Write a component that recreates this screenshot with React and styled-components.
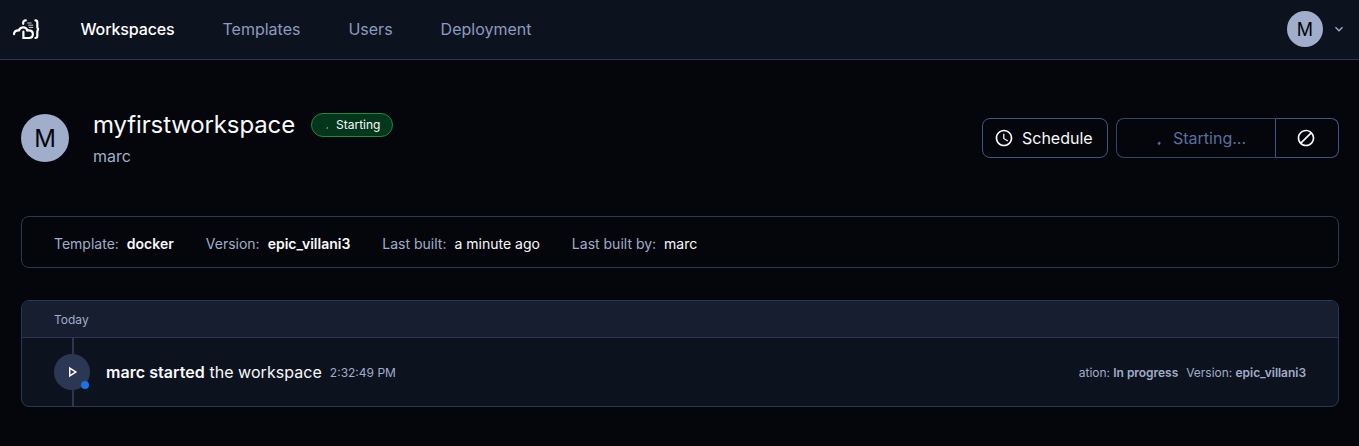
import React from "react";
import styled, { createGlobalStyle, css } from "styled-components";
import {
  MdOutlineSchedule,
  MdBlock,
  MdOutlinePlayArrow,
  MdKeyboardArrowDown,
} from "react-icons/md";

const color = {
  page: "#04060b",
  paper: "#0d121f",
  header: "#161e30",
  divider: "#2c3753",
  control: "#42557f",
  muted: "#a0adc8",
  nav: "#8c9bbf",
  text: "#f8f9fb",
};

const GlobalStyle = createGlobalStyle`
  *, *::before, *::after { box-sizing: border-box; }
  body {
    margin: 0;
    background: ${color.page};
    color: ${color.text};
    font-family: Inter, "Liberation Sans", sans-serif;
    font-size: 16px;
    line-height: 1.6;
    overflow: hidden;
  }
  svg { display: block; flex: none; }
`;

const Navbar = styled.header`
  display: flex;
  align-items: center;
  height: 60px;
  padding: 0 12px;
  background: ${color.paper};
  border-bottom: 1px solid ${color.divider};
`;

const Nav = styled.nav`
  display: flex;
  flex: 1;
  gap: 48px;
  margin-left: 38.5px;
`;

const NavItem = styled.a`
  color: ${(p) => (p.$active ? "#fff" : color.nav)};
  font-weight: ${(p) => (p.$active ? 500 : 400)};
  letter-spacing: ${(p) => (p.$active ? "-0.13px" : "normal")};
`;

const Avatar = styled.div`
  display: flex;
  align-items: center;
  justify-content: center;
  flex: none;
  width: ${(p) => p.$size}px;
  height: ${(p) => p.$size}px;
  border-radius: 50%;
  background: #a0aecc;
  color: #04060b;
  font-size: ${(p) => p.$size / 2}px;
  line-height: 1;
  padding-top: ${(p) => (p.$size > 40 ? 1 : 2)}px;
`;

const UserMenu = styled.div`
  display: flex;
  align-items: center;
  gap: 8px;
  margin-bottom: 1px;
  color: ${color.muted};
`;

const Main = styled.main`
  padding: 0 20px 0 21px;
`;

const PageHeader = styled.div`
  display: flex;
  align-items: center;
  height: 156px;
`;

const Heading = styled.div`
  flex: 1;
  margin-left: 24px;
  padding-top: 2px;
`;

const TitleRow = styled.div`
  display: flex;
  align-items: center;
  gap: 16px;
  height: 29px;
`;

const Title = styled.h1`
  margin: 0;
  font-size: 24px;
  font-weight: 400;
  line-height: 29px;
  letter-spacing: -0.13px;
`;

const Owner = styled.div`
  height: 26px;
  margin-top: 4px;
  color: ${color.muted};
  line-height: 26px;
`;

const StatusPill = styled.div`
  display: flex;
  align-items: center;
  height: 24px;
  margin-top: 1px;
  padding: 0 12px 0 13px;
  border: 1px solid #1f8a40;
  border-radius: 12px;
  background: #03361a;
  font-size: 12px;
  line-height: 22px;
  gap: 1px;
`;

const Actions = styled.div`
  display: flex;
  gap: 8px;
`;

const buttonBase = css`
  display: flex;
  align-items: center;
  height: 40px;
  background: transparent;
  border: 1px solid ${color.control};
  color: ${color.text};
  font: inherit;
`;

const Button = styled.button`
  ${buttonBase}
  width: 126px;
  padding: 0 0 0 11px;
  gap: 8px;
  border-radius: 8px;
`;

const ButtonLabel = styled.span`
  padding-top: 2px;
`;

const ButtonGroup = styled.div`
  display: flex;
`;

const PendingButton = styled.button`
  ${buttonBase}
  width: 160px;
  padding: 0 0 0 38px;
  border-color: #33456b;
  border-right-color: ${color.control};
  border-radius: 8px 0 0 8px;
  color: #5a6f9d;
`;

const CancelButton = styled.button`
  ${buttonBase}
  justify-content: center;
  width: 63px;
  padding: 0 2px 0 0;
  border-left: 0;
  border-radius: 0 8px 8px 0;
`;

const Stats = styled.dl`
  display: flex;
  align-items: center;
  gap: 32px;
  height: 52px;
  margin: 0 0 32px;
  padding: 4px 32px 0;
  border: 1px solid ${color.divider};
  border-radius: 8px;
  font-size: 14px;
`;

const Stat = styled.div`
  display: flex;
  gap: 8px;
`;

const StatLabel = styled.dt`
  color: ${color.muted};
`;

const StatValue = styled.dd`
  margin: 0;
  font-weight: ${(p) => (p.$strong ? 600 : 400)};
`;

const Timeline = styled.section`
  height: 107px;
  border: 1px solid ${color.divider};
  border-radius: 8px;
  background: ${color.paper};
  overflow: hidden;
`;

const TimelineDate = styled.div`
  height: 37px;
  padding: 1px 32px 0;
  border-bottom: 1px solid ${color.divider};
  background: ${color.header};
  color: ${color.muted};
  font-size: 12px;
  line-height: 36px;
`;

const Entry = styled.div`
  display: flex;
  align-items: center;
  height: 68px;
  padding: 0 32px;
`;

const Track = styled.div`
  display: flex;
  flex-direction: column;
  align-items: center;
  width: 36px;
  height: 100%;

  &::before,
  &::after {
    content: "";
    flex: 1;
    width: 2px;
    margin-left: 2px;
    background: ${color.divider};
  }
`;

const EventIcon = styled.div`
  position: relative;
  display: flex;
  align-items: center;
  justify-content: center;
  width: 36px;
  height: 36px;
  border-radius: 50%;
  background: ${color.divider};
`;

const EventStatus = styled.span`
  position: absolute;
  right: 1px;
  bottom: 1px;
  width: 8px;
  height: 8px;
  border-radius: 50%;
  background: #1f6fe5;
`;

const Summary = styled.div`
  display: flex;
  align-items: center;
  flex: 1;
  gap: 8px;
  margin-left: 16px;
  padding-top: 1px;
  letter-spacing: 0.05px;
`;

const Strong = styled.strong`
  font-weight: 600;
`;

const Time = styled.span`
  padding-top: 1px;
  color: ${color.muted};
  font-size: 12px;
  letter-spacing: 0;
`;

const Meta = styled.div`
  display: flex;
  gap: 8px;
  padding-top: 2px;
  color: ${color.muted};
  font-size: 12px;
  letter-spacing: -0.03px;
`;

const MetaItem = styled.span`
  white-space: nowrap;
`;

const Logo = () => (
  <svg width="30" height="24" viewBox="0 0 30 24" fill="none" stroke="#fff" strokeWidth="2.2" strokeLinecap="round">
    <path d="M2 16.2C2.2 13.6 4.2 12.2 7 12.4C7.8 8.9 13.6 7.8 15.4 12.2" />
    <path d="M11.2 5.8V4.8C11.2 3.2 12.1 2.4 13.8 2.4" />
    <path d="M11.4 13.6V20H16.8C22.2 20 22.2 12.4 16.8 12.4H15" />
    <path d="M23.4 2.4C24.9 2.4 25.3 3.2 25.3 4.5V8.4C25.3 10 25.6 10.9 26.8 11.2C25.6 11.5 25.3 12.4 25.3 14V17.8C25.3 19.3 24.9 20 23.4 20" />
    <path d="M15.6 5H19.2M16.6 7.2H20.8M17.2 9.4H20.8" strokeWidth="0.8" />
  </svg>
);

const Spinner = ({ size, stroke }) => (
  <svg width={size} height={size} viewBox="0 0 20 20" fill="none" stroke={stroke} strokeWidth="2.4">
    <path d="M3.6 17.2L5.6 14.6" />
  </svg>
);

const stats = [
  { label: "Template:", value: "docker", strong: true },
  { label: "Version:", value: "epic_villani3", strong: true },
  { label: "Last built:", value: "a minute ago" },
  { label: "Last built by:", value: "marc" },
];

const links = ["Workspaces", "Templates", "Users", "Deployment"];

export default function App() {
  return (
    <>
      <GlobalStyle />
      <Navbar>
        <Logo />
        <Nav>
          {links.map((name, i) => (
            <NavItem key={name} $active={i === 0}>{name}</NavItem>
          ))}
        </Nav>
        <UserMenu>
          <Avatar $size={36}>M</Avatar>
          <MdKeyboardArrowDown size={16} />
        </UserMenu>
      </Navbar>
      <Main>
        <PageHeader>
          <Avatar $size={48}>M</Avatar>
          <Heading>
            <TitleRow>
              <Title>myfirstworkspace</Title>
              <StatusPill>
                <Spinner size={10} stroke="#7fb890" />
                Starting
              </StatusPill>
            </TitleRow>
            <Owner>marc</Owner>
          </Heading>
          <Actions>
            <Button>
              <MdOutlineSchedule size={20} />
              <ButtonLabel>Schedule</ButtonLabel>
            </Button>
            <ButtonGroup>
              <PendingButton disabled>
                <Spinner size={18} stroke="#5a6f9d" />
                <ButtonLabel>Starting...</ButtonLabel>
              </PendingButton>
              <CancelButton aria-label="Cancel">
                <MdBlock size={20} />
              </CancelButton>
            </ButtonGroup>
          </Actions>
        </PageHeader>
        <Stats>
          {stats.map((s) => (
            <Stat key={s.label}>
              <StatLabel>{s.label}</StatLabel>
              <StatValue $strong={s.strong}>{s.value}</StatValue>
            </Stat>
          ))}
        </Stats>
        <Timeline>
          <TimelineDate>Today</TimelineDate>
          <Entry>
            <Track>
              <EventIcon>
                <MdOutlinePlayArrow size={18} />
                <EventStatus />
              </EventIcon>
            </Track>
            <Summary>
              <span>
                <Strong>marc started</Strong> the workspace
              </span>
              <Time>2:32:49 PM</Time>
            </Summary>
            <Meta>
              <MetaItem>ation: <Strong>In progress</Strong></MetaItem>
              <MetaItem>Version: <Strong>epic_villani3</Strong></MetaItem>
            </Meta>
          </Entry>
        </Timeline>
      </Main>
    </>
  );
}
